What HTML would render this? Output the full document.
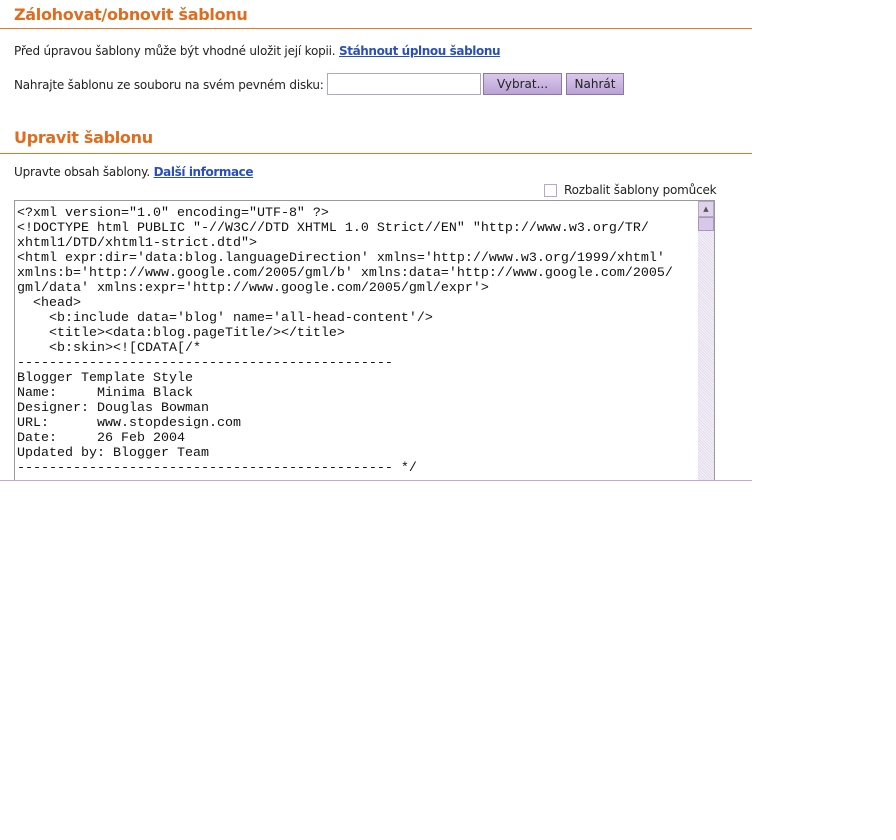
<!DOCTYPE html>
<html><head><meta charset="utf-8"><style>
body{margin:0;background:#fff;font-family:"DejaVu Sans","Liberation Sans",sans-serif;font-size:12px;color:#222;width:896px;height:840px;overflow:hidden;position:relative}
.h{position:absolute;left:14px;color:#e06c1e;font-weight:bold;font-size:16px;letter-spacing:-0.3px}
.line{position:absolute;left:0;width:752px;height:1px;background:#e07a2a}
.t{position:absolute;left:14px;font-size:12px;letter-spacing:-0.2px}
a{color:#2a4fb8;font-weight:bold;text-decoration:underline;letter-spacing:-0.4px}
.btn{position:absolute;top:73px;height:22px;background:linear-gradient(#d9c8ea,#bba2d6);border:1px solid #8c78a8;font-size:12px;text-align:center;line-height:21px;box-sizing:border-box}
pre{margin:0;font-family:"Liberation Mono",monospace;font-size:13.33px;line-height:15px;color:#111}
</style></head><body>
<div class="h" style="top:5px">Zálohovat/obnovit šablonu</div>
<div class="line" style="top:28px"></div>
<div class="t" style="top:44px">Před úpravou šablony může být vhodné uložit její kopii. <a>Stáhnout úplnou šablonu</a></div>
<div class="t" style="top:78px">Nahrajte šablonu ze souboru na svém pevném disku:</div>
<div style="position:absolute;left:327px;top:73px;width:154px;height:22px;border:1px solid #b5a5c5;box-sizing:border-box"></div>
<div class="btn" style="left:483px;width:79px">Vybrat...</div>
<div class="btn" style="left:566px;width:58px">Nahrát</div>
<div class="h" style="top:128px">Upravit šablonu</div>
<div class="line" style="top:153px"></div>
<div class="t" style="top:165px">Upravte obsah šablony. <a>Další informace</a></div>
<div style="position:absolute;left:544px;top:184px;width:13px;height:13px;border:1px solid #b9a7cb;box-sizing:border-box"></div>
<div class="t" style="left:564px;top:183px">Rozbalit šablony pomůcek</div>
<div style="position:absolute;left:14px;top:200px;width:701px;height:280px;border:1px solid #999;border-bottom:none;box-sizing:border-box;overflow:hidden">
<pre style="padding:5px 0 0 2px">&lt;?xml version="1.0" encoding="UTF-8" ?&gt;
&lt;!DOCTYPE html PUBLIC "-//W3C//DTD XHTML 1.0 Strict//EN" "http://www.w3.org/TR/
xhtml1/DTD/xhtml1-strict.dtd"&gt;
&lt;html expr:dir='data:blog.languageDirection' xmlns='http://www.w3.org/1999/xhtml'
xmlns:b='http://www.google.com/2005/gml/b' xmlns:data='http://www.google.com/2005/
gml/data' xmlns:expr='http://www.google.com/2005/gml/expr'&gt;
  &lt;head&gt;
    &lt;b:include data='blog' name='all-head-content'/&gt;
    &lt;title&gt;&lt;data:blog.pageTitle/&gt;&lt;/title&gt;
    &lt;b:skin&gt;&lt;![CDATA[/*
-----------------------------------------------
Blogger Template Style
Name:     Minima Black
Designer: Douglas Bowman
URL:      www.stopdesign.com
Date:     26 Feb 2004
Updated by: Blogger Team
----------------------------------------------- */</pre>
<div style="position:absolute;right:0;top:0;width:16px;height:280px;background:repeating-linear-gradient(45deg,#e4dced 0 1px,#f4f0f8 1px 2px)"></div>
<div style="position:absolute;right:0;top:0;width:16px;height:16px;background:#ddd2ea;border:1px solid #b5a5c5;box-sizing:border-box;font-size:7px;text-align:center;line-height:14px;color:#555">▲</div>
<div style="position:absolute;right:0;top:16px;width:16px;height:14px;background:#d6c8e6;border:1px solid #a896bc;box-sizing:border-box"></div>
</div>
<div style="position:absolute;left:0;top:480px;width:752px;height:1px;background:#c2a8dc"></div>
</body></html>
